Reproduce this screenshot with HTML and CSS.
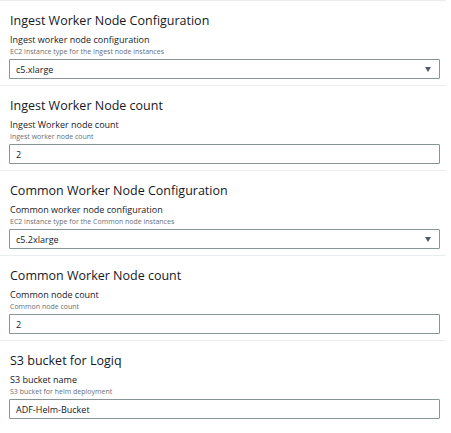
FILE: index.html
```html
<!DOCTYPE html>
<html>
<head>
<meta charset="utf-8">
<link rel="stylesheet" href="styles.css">
</head>
<body>
<div class="form">
  <section class="group">
    <h2 class="title">Ingest Worker Node Configuration</h2>
    <div class="label">Ingest worker node configuration</div>
    <div class="desc">EC2 instance type for the Ingest node instances</div>
    <div class="field select"><span>c5.xlarge</span><span class="caret"></span></div>
  </section>
  <section class="group">
    <h2 class="title">Ingest Worker Node count</h2>
    <div class="label">Ingest Worker node count</div>
    <div class="desc">Ingest worker node count</div>
    <div class="field"><span>2</span></div>
  </section>
  <section class="group">
    <h2 class="title">Common Worker Node Configuration</h2>
    <div class="label">Common worker node configuration</div>
    <div class="desc">EC2 instance type for the Common node instances</div>
    <div class="field select"><span>c5.2xlarge</span><span class="caret"></span></div>
  </section>
  <section class="group">
    <h2 class="title">Common Worker Node count</h2>
    <div class="label">Common node count</div>
    <div class="desc">Common node count</div>
    <div class="field"><span>2</span></div>
  </section>
  <section class="group">
    <h2 class="title">S3 bucket for Logiq</h2>
    <div class="label">S3 bucket name</div>
    <div class="desc">S3 bucket for helm deployment</div>
    <div class="field"><span>ADF-Helm-Bucket</span></div>
  </section>
</div>
</body>
</html>
```

FILE: styles.css
```css
html, body {
  margin: 0;
  padding: 0;
  background: #ffffff;
}
body {
  font-family: "Open Sans", "Noto Sans", sans-serif;
  color: #16191f;
}
.form {
  width: 446px;
  display: flex;
  flex-direction: column;
}
.group {
  border-top: 1px solid #eaeded;
  height: 84px;
  padding: 0 6px 0 9px;
  display: flex;
  flex-direction: column;
}
.title {
  margin: 12px 0 0 1px;
  font-size: 12.5px;
  font-weight: 400;
  line-height: 16px;
  color: #16191f;
}
.label {
  margin: 5px 0 0 1px;
  font-size: 9px;
  line-height: 12px;
}
.desc {
  margin: 1px 0 0 1px;
  font-size: 7px;
  line-height: 9px;
  color: #687078;
}
.field {
  margin-top: 3px;
  height: 18px;
  border: 1px solid #879596;
  border-radius: 1px;
  display: flex;
  align-items: center;
  justify-content: space-between;
  padding: 0 8px 0 6px;
  font-size: 9px;
}
.caret {
  width: 0;
  height: 0;
  border-left: 3.5px solid transparent;
  border-right: 3.5px solid transparent;
  border-top: 5px solid #545b64;
}
```
